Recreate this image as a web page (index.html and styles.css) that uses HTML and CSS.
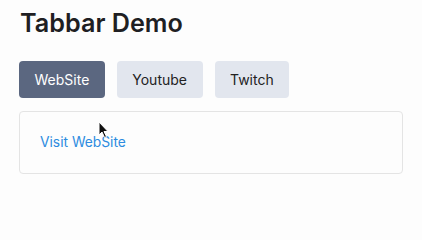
FILE: index.html
```html
<!DOCTYPE html>
<html>
<head>
<meta charset="utf-8">
<link rel="stylesheet" href="styles.css">
</head>
<body>
<div class="page">
  <h1 class="title">Tabbar Demo</h1>
  <div class="tabs">
    <button class="tab active">WebSite</button>
    <button class="tab">Youtube</button>
    <button class="tab">Twitch</button>
  </div>
  <div class="panel">
    <a class="link" href="#">Visit WebSite</a>
  </div>
</div>
<svg class="cursor" width="12" height="18" viewBox="0 0 12 18"><path d="M1 1 L1 14 L4 11 L6.5 16.5 L8.5 15.5 L6 10.5 L10 10.5 Z" fill="#111" stroke="#fff" stroke-width="1"/></svg>
</body>
</html>
```
FILE: styles.css
```css
html, body {
  margin: 0;
  background: #fdfdfd;
}
body {
  font-family: Inter, "Noto Sans", sans-serif;
  position: relative;
  width: 422px;
  height: 210px;
  overflow: hidden;
}
.page {
  padding: 8px 19px 0 19px;
  display: flex;
  flex-direction: column;
}
.title {
  margin: 0 0 0 1px;
  font-size: 25.2px;
  font-weight: 600;
  line-height: 30px;
  color: #1f1f23;
}
.tabs {
  display: flex;
  gap: 12px;
  margin-top: 23px;
}
.tab {
  font-family: Inter, "Noto Sans", sans-serif;
  font-size: 14px;
  line-height: 21px;
  padding: 8px 15.5px;
  border: none;
  border-radius: 4px;
  background: #e2e6ee;
  color: #222;
  cursor: pointer;
}
.tab.active {
  background: #5b6780;
  color: #fff;
}
.panel {
  margin-top: 13px;
  width: 384px;
  box-sizing: border-box;
  border: 1px solid #e4e4e4;
  border-radius: 4px;
  padding: 20px;
  height: 63px;
}
.link {
  font-size: 13.8px;
  line-height: 21px;
  color: #2d8ce0;
  text-decoration: none;
  display: block;
}
.cursor {
  position: absolute;
  left: 98px;
  top: 121px;
}
```
